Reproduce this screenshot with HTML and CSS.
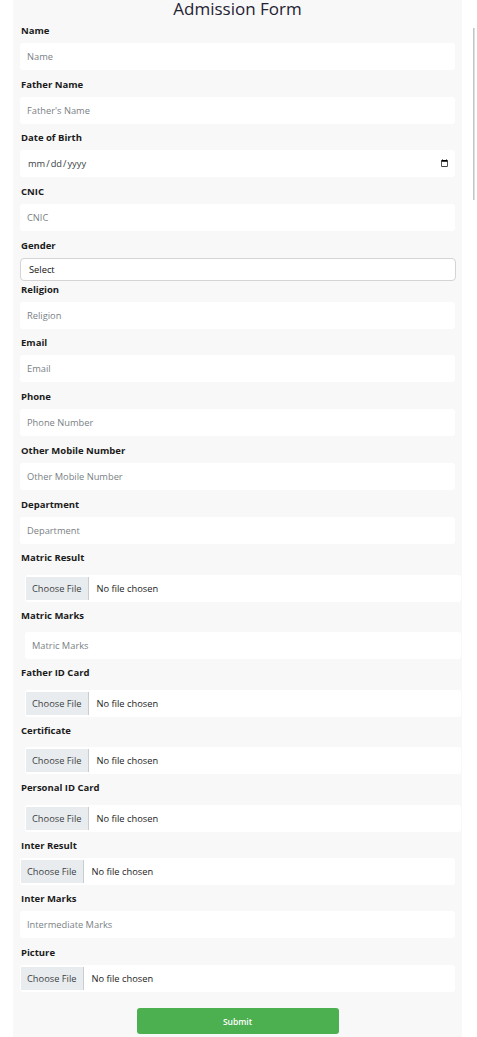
FILE: index.html
```html
<!DOCTYPE html>
<html lang="en">
<head>
<meta charset="utf-8">
<title>Admission Form</title>
<link rel="stylesheet" href="styles.css">
</head>
<body>
<div class="side-bar"></div>
<form class="form">
  <h2 class="title">Admission Form</h2>

  <label class="lbl">Name</label>
  <input class="field" type="text" placeholder="Name">

  <label class="lbl">Father Name</label>
  <input class="field" type="text" placeholder="Father's Name">

  <label class="lbl">Date of Birth</label>
  <input class="field date" type="date">

  <label class="lbl">CNIC</label>
  <input class="field" type="text" placeholder="CNIC">

  <label class="lbl">Gender</label>
  <select class="sel">
    <option>Select</option>
    <option>Male</option>
    <option>Female</option>
  </select>

  <label class="lbl">Religion</label>
  <input class="field" type="text" placeholder="Religion">

  <label class="lbl">Email</label>
  <input class="field" type="email" placeholder="Email">

  <label class="lbl">Phone</label>
  <input class="field" type="text" placeholder="Phone Number">

  <label class="lbl">Other Mobile Number</label>
  <input class="field" type="text" placeholder="Other Mobile Number">

  <label class="lbl">Department</label>
  <input class="field" type="text" placeholder="Department">

  <label class="lbl">Matric Result</label>
  <input class="field file shifted" type="file">

  <label class="lbl">Matric Marks</label>
  <input class="field shifted" type="text" placeholder="Matric Marks">

  <label class="lbl">Father ID Card</label>
  <input class="field file shifted" type="file">

  <label class="lbl">Certificate</label>
  <input class="field file shifted" type="file">

  <label class="lbl">Personal ID Card</label>
  <input class="field file shifted" type="file">

  <label class="lbl">Inter Result</label>
  <input class="field file" type="file">

  <label class="lbl">Inter Marks</label>
  <input class="field" type="text" placeholder="Intermediate Marks">

  <label class="lbl">Picture</label>
  <input class="field file" type="file">

  <button class="submit" type="submit">Submit</button>
</form>
</body>
</html>
```

FILE: styles.css
```css
html, body {
  margin: 0;
  padding: 0;
  background: #ffffff;
}

body {
  font-family: "Open Sans", "Noto Sans", sans-serif;
  color: #212529;
}

.side-bar {
  position: absolute;
  left: 473px;
  top: 28px;
  width: 1px;
  height: 172px;
  background: #dcdcdc;
  border-left: 1px solid #c6c6c6;
}

.form {
  display: flex;
  flex-direction: column;
  align-items: flex-start;
  box-sizing: border-box;
  width: 449px;
  margin-left: 13px;
  padding: 0 7px 8px;
  background: #f8f8f8;
  min-height: 1037px;
}

.title {
  align-self: stretch;
  margin: 0 0 6px;
  text-align: center;
  font-size: 17px;
  line-height: 18px;
  font-weight: 500;
  color: #1f2233;
}

.lbl {
  display: block;
  margin-left: 1px;
  font-size: 9.5px;
  line-height: 13px;
  font-weight: 700;
  color: #1b1b1b;
}

.field {
  box-sizing: border-box;
  width: 435px;
  height: 27px;
  margin: 6px 0 7.7px;
  padding: 0 7px;
  border: none;
  border-radius: 3px;
  background: #ffffff;
  font-family: "Open Sans", "Noto Sans", sans-serif;
  font-size: 9.3px;
  color: #212529;
  outline: none;
}

.field::placeholder {
  color: #7a7f86;
}

.date {
  color: #3a3f45;
  padding-right: 6px;
}

.date::-webkit-calendar-picker-indicator {
  width: 9px;
  height: 9px;
  margin: 0;
  padding: 0;
}

.sel {
  box-sizing: border-box;
  width: 436px;
  height: 23px;
  margin: 6px 0 2px;
  padding: 0 8px;
  border: 1px solid #d4d4d4;
  border-radius: 4px;
  background: #ffffff;
  font-family: "Open Sans", "Noto Sans", sans-serif;
  font-size: 9.3px;
  color: #111111;
  appearance: none;
  -webkit-appearance: none;
  outline: none;
}

.shifted {
  width: 436px;
  margin: 10.5px 0 7px 5px;
}

.file {
  padding: 2px 0 2px 1px;
  color: #1b1b1b;
}

.file::file-selector-button {
  height: 100%;
  margin: 0 8px 0 0;
  padding: 0 6px;
  border: none;
  border-right: 1px solid #c9ccd0;
  border-radius: 0;
  background: #e9ecef;
  font-family: "Open Sans", "Noto Sans", sans-serif;
  font-size: 9.3px;
  color: #3b3f44;
}

.submit {
  align-self: center;
  width: 202px;
  height: 26px;
  margin-top: 8.5px;
  border: none;
  border-radius: 3px;
  background: #4caf50;
  color: #ffffff;
  font-family: "Open Sans", "Noto Sans", sans-serif;
  font-size: 8.5px;
  font-weight: 600;
}
```
